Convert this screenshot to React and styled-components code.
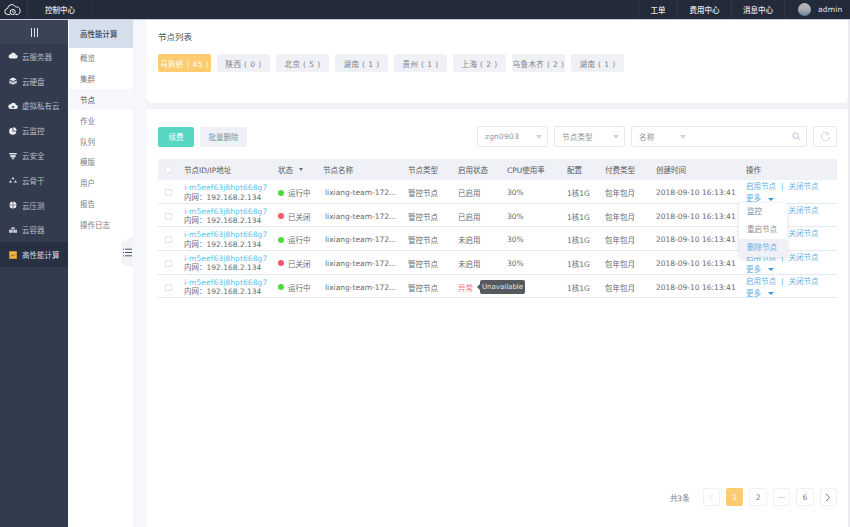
import React from 'react';
import styled, { createGlobalStyle } from 'styled-components';

const GlobalStyle = createGlobalStyle`
  html, body {
    margin: 0;
    padding: 0;
    background: #fff;
    overflow: hidden;
  }
  * {
    box-sizing: border-box;
  }
  body {
    font-family: 'DejaVu Sans', 'Noto Sans CJK SC', sans-serif;
    font-size: 7.5px;
    color: #5b5f66;
  }
`;

const Shell = styled.div`
  width: 850px;
  height: 527px;
  display: flex;
  flex-direction: column;
`;

const TopBar = styled.header`
  height: 20px;
  flex: none;
  display: flex;
  align-items: stretch;
  background: #232b3a;
  color: #e6e8ec;
  border-bottom: 1px solid #c9ccd3;
`;

const LogoCell = styled.div`
  width: 28px;
  display: flex;
  align-items: center;
  padding-left: 4px;
  border-right: 1px solid #2e3747;
`;

const ConsoleCell = styled.div`
  width: 65px;
  display: flex;
  align-items: center;
  justify-content: center;
  font-weight: 500;
  border-right: 1px solid #2a3241;
`;

const TopSpacer = styled.div`
  flex: 1;
`;

const TopLink = styled.div`
  width: ${p => p.$w}px;
  display: flex;
  align-items: center;
  justify-content: center;
  font-weight: 500;
  border-left: 1px solid #2e3747;
`;

const UserCell = styled.div`
  width: 66px;
  display: flex;
  align-items: center;
  gap: 7px;
  padding-left: 13px;
  border-left: 1px solid #2e3747;
  letter-spacing: 0.2px;
`;

const Avatar = styled.span`
  width: 13px;
  height: 13px;
  border-radius: 50%;
  background: linear-gradient(180deg, #b9b5bb 0%, #a8a8b2 55%, #5d7f9c 100%);
`;

const Body = styled.div`
  flex: 1;
  display: flex;
  min-height: 0;
`;

const Sidebar = styled.nav`
  width: 69px;
  flex: none;
  background: #333c4e;
  border-right: 1px solid #fff;
`;

const Collapse = styled.div`
  height: 24px;
  display: flex;
  align-items: center;
  justify-content: center;
  gap: 2px;
  background: #3b4456;
  span {
    width: 1px;
    height: 9px;
    background: #dfe3ea;
  }
`;

const NavItem = styled.div`
  height: 24.8px;
  display: flex;
  align-items: center;
  gap: 4px;
  padding-left: 8px;
  color: ${p => (p.$active ? '#d5d9e0' : '#b5bbc6')};
  background: ${p => (p.$active ? '#283142' : 'transparent')};
  white-space: nowrap;
  svg {
    flex: none;
  }
`;

const SubMenu = styled.aside`
  position: relative;
  width: 64px;
  flex: none;
  background: #fff;
`;

const SubTitle = styled.div`
  height: 27.5px;
  display: flex;
  align-items: center;
  padding-left: 11px;
  background: #d5deeb;
  color: #3d4350;
  font-weight: 500;
`;

const SubItem = styled.div`
  height: 20.8px;
  display: flex;
  align-items: center;
  padding-left: 11px;
  color: ${p => (p.$active ? '#4a4f58' : '#777c85')};
  background: ${p => (p.$active ? '#f7f8fb' : 'transparent')};
`;

const FoldTab = styled.div`
  position: absolute;
  right: 0;
  top: 217px;
  width: 12px;
  height: 31px;
  display: flex;
  align-items: center;
  justify-content: center;
  background: #f2f3f8;
  clip-path: polygon(100% 0, 100% 100%, 0 84%, 0 16%);
`;

const Gutter = styled.div`
  width: 13px;
  flex: none;
  background: #f6f7fb;
`;

const Main = styled.main`
  flex: 1;
  display: flex;
  flex-direction: column;
  min-width: 0;
  border-right: 2px solid #ebebef;
`;

const TopCard = styled.section`
  height: 83px;
  flex: none;
  padding: 12px 12px 0;
`;

const PageTitle = styled.h1`
  margin: 0 0 11px;
  font-size: 8.5px;
  line-height: 11px;
  font-weight: 400;
  color: #4a4f58;
`;

const TagRow = styled.div`
  display: flex;
  gap: 6px;
`;

const Tag = styled.div`
  width: 53px;
  height: 18px;
  display: flex;
  align-items: center;
  justify-content: center;
  border-radius: 2px;
  letter-spacing: 0.4px;
  white-space: pre;
  background: ${p => (p.$active ? '#fdcb70' : '#f0f1f6')};
  color: ${p => (p.$active ? '#fff' : '#7d8189')};
`;

const Divider = styled.div`
  position: relative;
  height: 6px;
  flex: none;
  background: #f0f1f6;
  &::before,
  &::after {
    content: '';
    position: absolute;
    top: -6px;
    width: 4px;
    height: 12px;
    background: #f3f4f9;
  }
  &::before {
    left: 0;
    clip-path: polygon(0 0, 100% 50%, 0 100%);
  }
  &::after {
    right: 0;
    clip-path: polygon(100% 0, 0 50%, 100% 100%);
  }
`;

const ListCard = styled.section`
  flex: 1;
  display: flex;
  flex-direction: column;
  padding: 17px 11px 0 12px;
`;

const Toolbar = styled.div`
  display: flex;
  align-items: center;
  gap: 6px;
  height: 21px;
  margin-bottom: 12px;
`;

const Button = styled.button`
  height: 20px;
  width: ${p => p.$w}px;
  padding: 0;
  border: none;
  border-radius: 2px;
  font: inherit;
  background: ${p => (p.$primary ? '#57d6c1' : '#f0f1f6')};
  color: ${p => (p.$primary ? '#fff' : '#8a8e96')};
`;

const Grow = styled.div`
  flex: 1;
`;

const Select = styled.div`
  position: relative;
  width: ${p => p.$w}px;
  height: 21px;
  display: flex;
  align-items: center;
  padding-left: 7px;
  border: 1px solid #e3e8f1;
  border-radius: 2px;
  color: #8d9199;
  letter-spacing: 0.2px;
`;

const Caret = styled.i`
  position: absolute;
  left: ${p => p.$left}px;
  top: 8px;
  width: 0;
  height: 0;
  border-left: 3px solid transparent;
  border-right: 3px solid transparent;
  border-top: 4px solid #c6d4e6;
`;

const SearchMark = styled.span`
  position: absolute;
  right: 5px;
  top: 5px;
  display: flex;
`;

const RefreshBtn = styled.div`
  width: 24px;
  height: 21px;
  display: flex;
  align-items: center;
  justify-content: center;
  border: 1px solid #e3e8f1;
  border-radius: 2px;
`;

const columns = '26px 94px 45px 85px 50px 49px 60px 38px 51px 90px 91px';

const HeadRow = styled.div`
  display: grid;
  grid-template-columns: ${columns};
  height: 21px;
  align-items: center;
  background: #f0f1f6;
  color: #555a63;
`;

const Row = styled.div`
  display: grid;
  grid-template-columns: ${columns};
  height: 23.67px;
  align-items: center;
  border-bottom: 1px solid #e5e9f2;
  color: #666a72;
  white-space: nowrap;
`;

const CheckCell = styled.div`
  display: flex;
  padding-left: 7px;
`;

const Check = styled.span`
  width: 7px;
  height: 7px;
  border: 1px solid #dfe3ea;
  border-radius: 1px;
  background: #fff;
`;

const HeadSort = styled.div`
  display: flex;
  align-items: center;
  gap: 6px;
`;

const SortMark = styled.i`
  width: 0;
  height: 0;
  border-left: 2.5px solid transparent;
  border-right: 2.5px solid transparent;
  border-top: 3px solid #666a72;
`;

const IdCell = styled.div`
  line-height: 9.5px;
`;

const NodeId = styled.div`
  color: #55c3ee;
  letter-spacing: 0.1px;
`;

const Status = styled.div`
  display: flex;
  align-items: center;
  gap: 4px;
`;

const Dot = styled.span`
  width: 6px;
  height: 6px;
  border-radius: 50%;
  background: ${p => (p.$on ? '#4cdb3c' : '#f4566a')};
`;

const NameCell = styled.div`
  padding-left: 2px;
`;

const StateCell = styled.div`
  position: relative;
  color: ${p => (p.$bad ? '#f5737f' : 'inherit')};
`;

const Tooltip = styled.div`
  position: absolute;
  left: 22px;
  top: -2px;
  width: 45px;
  height: 14px;
  display: flex;
  align-items: center;
  justify-content: center;
  border-radius: 2px;
  background: #55585d;
  color: #e8e8e8;
  font-size: 7px;
  &::before {
    content: '';
    position: absolute;
    left: -3px;
    top: 4px;
    border-top: 3px solid transparent;
    border-bottom: 3px solid transparent;
    border-right: 3px solid #55585d;
  }
`;

const OpsCell = styled.div`
  position: relative;
  padding-top: 1px;
  line-height: 12px;
  color: #5fb0e3;
`;

const OpsLine = styled.div`
  display: flex;
  align-items: center;
`;

const Sep = styled.span`
  margin: 0 5px;
`;

const MoreCaret = styled.i`
  margin-left: 7px;
  width: 0;
  height: 0;
  border-left: 3px solid transparent;
  border-right: 3px solid transparent;
  border-top: 3px solid #3c9ad6;
`;

const Dropdown = styled.div`
  position: absolute;
  left: -7px;
  top: 23px;
  z-index: 2;
  width: 48px;
  background: #fff;
  box-shadow: 0 1px 4px rgba(120, 130, 150, 0.28);
  border-radius: 1px;
`;

const DropItem = styled.div`
  height: 18px;
  display: flex;
  align-items: center;
  padding-left: 8px;
  color: ${p => (p.$hover ? '#5fb0e3' : '#8a8e96')};
  background: ${p => (p.$hover ? '#f0f1f6' : 'transparent')};
`;

const Pager = styled.div`
  margin-top: auto;
  margin-bottom: 21px;
  display: flex;
  align-items: center;
  justify-content: flex-end;
  gap: 6px;
`;

const PagerTotal = styled.span`
  margin-right: 7px;
  color: #7d8189;
`;

const PageBtn = styled.div`
  width: 17.4px;
  height: 18px;
  display: flex;
  align-items: center;
  justify-content: center;
  border-radius: 2px;
  border: 1px solid ${p => (p.$active ? '#fdcb70' : '#f0f1f5')};
  background: ${p => (p.$active ? '#fdcb70' : '#fff')};
  color: ${p => (p.$active ? '#fff' : '#777c85')};
`;

const CloudLogo = () => (
  <svg width="17" height="13" viewBox="0 0 17 13" fill="none" stroke="#eef0f3" strokeWidth="1">
    <path d="M6 11.5H4a3 3 0 0 1-.4-6A4.2 4.2 0 0 1 11.6 4 3.8 3.8 0 0 1 13 11.5h-1.5" />
    <circle cx="8.7" cy="9" r="2.6" />
    <path d="M8.7 7.6V9l1 .7" />
  </svg>
);

const iconPaths = {
  server: <path d="M3 9h6.2a2.3 2.3 0 0 0 .3-4.6A3.2 3.2 0 0 0 3.4 4 2.5 2.5 0 0 0 3 9z" />,
  disk: (
    <>
      <path d="M6 1.8 10.5 4 6 6.2 1.5 4z" />
      <path opacity="0.75" d="M1.5 5v3.6L6 10.4l4.5-1.8V5L6 7.2z" />
    </>
  ),
  vpc: <path fillRule="evenodd" d="M3 9.6h6.2a2.5 2.5 0 0 0 .3-5A3.4 3.4 0 0 0 3.2 4 2.8 2.8 0 0 0 3 9.6zM4.5 6.2h3v1.8h-3z" />,
  monitor: (
    <>
      <path d="M5.4 2a4.3 4.3 0 1 0 4.5 4.6H5.4z" />
      <path d="M6.4 1.6V5.6h4A4.2 4.2 0 0 0 6.4 1.6z" />
    </>
  ),
  shield: (
    <>
      <path d="M1.5 2.5h9v1.6h-9z" />
      <path d="M2.4 5.2h7.2L8.4 7.8H3.6zM4.2 8.6h3.6L6 10.4z" />
    </>
  ),
  backbone: (
    <>
      <path d="M6 2.4 7.8 5H4.2z" />
      <path d="M3 6.4 4.8 9H1.2zM9 6.4 10.8 9H7.2z" />
    </>
  ),
  stress: <path fillRule="evenodd" d="M6 1.8a4.2 4.2 0 1 1 0 8.4 4.2 4.2 0 0 1 0-8.4zM1.8 5.6v.8h8.4v-.8zM5.6 1.8v8.4h.8V1.8z" />,
  container: (
    <>
      <path opacity="0.8" d="M4 2.8h4v2.4H4z" />
      <path opacity="0.8" d="M1.2 5.8h4.5v3.6H1.2zM6.3 5.8h4.5v3.6H6.3z" />
    </>
  ),
  hpc: (
    <>
      <path fill="#f3b43f" d="M1.5 1.5h9v9h-9z" />
      <path fill="#8a6a2c" d="M3 7.5 5 5.5l1.5 1.2L9 4.5v1L6.5 7.8 5 6.6 3 8.5z" />
    </>
  ),
};

const NavIcon = ({ name }) => (
  <svg width="10" height="10" viewBox="0 0 12 12" fill="#eceef2">
    {iconPaths[name]}
  </svg>
);

const navItems = [
  ['server', '云服务器'],
  ['disk', '云硬盘'],
  ['vpc', '虚拟私有云'],
  ['monitor', '云监控'],
  ['shield', '云安全'],
  ['backbone', '云骨干'],
  ['stress', '云压测'],
  ['container', '云容器'],
  ['hpc', '高性能计算'],
];

const subItems = ['概览', '集群', '节点', '作业', '队列', '模版', '用户', '报告', '操作日志'];

const tags = [
  '马驹桥 ( 45 )',
  '陕西 ( 0 )',
  '北京 ( 5 )',
  '湖南 ( 1 )',
  '贵州 ( 1 )',
  '上海 ( 2 )',
  '乌鲁木齐 ( 2 )',
  '湖南 ( 1 )',
];

const nodes = [
  { on: true, state: '已启用' },
  { on: false, state: '已启用' },
  { on: true, state: '未启用' },
  { on: false, state: '未启用' },
  { on: true, state: '异常', bad: true },
];

const App = () => (
  <Shell>
    <GlobalStyle />
    <TopBar>
      <LogoCell>
        <CloudLogo />
      </LogoCell>
      <ConsoleCell>控制中心</ConsoleCell>
      <TopSpacer />
      <TopLink $w={39}>工单</TopLink>
      <TopLink $w={54}>费用中心</TopLink>
      <TopLink $w={53}>消息中心</TopLink>
      <UserCell>
        <Avatar />
        admin
      </UserCell>
    </TopBar>
    <Body>
      <Sidebar>
        <Collapse>
          <span />
          <span />
          <span />
        </Collapse>
        {navItems.map(([icon, label]) => (
          <NavItem key={icon} $active={icon === 'hpc'}>
            <NavIcon name={icon} />
            {label}
          </NavItem>
        ))}
      </Sidebar>
      <SubMenu>
        <SubTitle>高性能计算</SubTitle>
        {subItems.map(item => (
          <SubItem key={item} $active={item === '节点'}>
            {item}
          </SubItem>
        ))}
        <FoldTab>
          <svg width="9" height="9" viewBox="0 0 9 9" fill="none" stroke="#3d4350" strokeWidth="0.9">
            <path d="M0 1.2h1M2 1.2h7M0 4.5h1M2 4.5h7M0 7.8h1M2 7.8h7" />
          </svg>
        </FoldTab>
      </SubMenu>
      <Gutter />
      <Main>
        <TopCard>
          <PageTitle>节点列表</PageTitle>
          <TagRow>
            {tags.map((tag, i) => (
              <Tag key={i} $active={i === 0}>
                {tag}
              </Tag>
            ))}
          </TagRow>
        </TopCard>
        <Divider />
        <ListCard>
          <Toolbar>
            <Button $primary $w={36}>续费</Button>
            <Button $w={47}>批量删除</Button>
            <Grow />
            <Select $w={71}>
              zgn0903
              <Caret $left={58} />
            </Select>
            <Select $w={71}>
              节点类型
              <Caret $left={58} />
            </Select>
            <Select $w={176}>
              名称
              <Caret $left={48} />
              <SearchMark>
                <svg width="9" height="9" viewBox="0 0 9 9" fill="none" stroke="#c6d4e6" strokeWidth="1.2">
                  <circle cx="3.7" cy="3.7" r="2.6" />
                  <path d="M5.6 5.6 8.2 8.2" />
                </svg>
              </SearchMark>
            </Select>
            <RefreshBtn>
              <svg width="11" height="11" viewBox="0 0 11 11" fill="none" stroke="#c6d4e6" strokeWidth="0.9">
                <path d="M8.9 3.2A4.2 4.2 0 1 0 9.7 6" />
                <path d="M6.6 0.8 8.9 3.2 6.4 4.2" />
              </svg>
            </RefreshBtn>
          </Toolbar>
          <HeadRow>
            <CheckCell>
              <Check />
            </CheckCell>
            <div>节点ID/IP地址</div>
            <HeadSort>
              状态
              <SortMark />
            </HeadSort>
            <div>节点名称</div>
            <div>节点类型</div>
            <div>启用状态</div>
            <div>CPU使用率</div>
            <div>配置</div>
            <div>付费类型</div>
            <div>创建时间</div>
            <div>操作</div>
          </HeadRow>
          {nodes.map((node, i) => (
            <Row key={i}>
              <CheckCell>
                <Check />
              </CheckCell>
              <IdCell>
                <NodeId>i-m5eef63j8hpt668g7</NodeId>
                <div>内网：192.168.2.134</div>
              </IdCell>
              <Status>
                <Dot $on={node.on} />
                {node.on ? '运行中' : '已关闭'}
              </Status>
              <NameCell>lixiang-team-172...</NameCell>
              <div>管控节点</div>
              <StateCell $bad={node.bad}>
                {node.state}
                {node.bad && <Tooltip>Unavailable</Tooltip>}
              </StateCell>
              <div>30%</div>
              <div>1核1G</div>
              <div>包年包月</div>
              <div>2018-09-10 16:13:41</div>
              <OpsCell>
                <OpsLine>
                  启用节点
                  <Sep>|</Sep>
                  关闭节点
                </OpsLine>
                <OpsLine>
                  更多
                  <MoreCaret />
                </OpsLine>
                {i === 0 && (
                  <Dropdown>
                    <DropItem>监控</DropItem>
                    <DropItem>重启节点</DropItem>
                    <DropItem $hover>删除节点</DropItem>
                  </Dropdown>
                )}
              </OpsCell>
            </Row>
          ))}
          <Pager>
            <PagerTotal>共3条</PagerTotal>
            <PageBtn>
              <svg width="6" height="9" viewBox="0 0 6 9" fill="none" stroke="#dfe3ea" strokeWidth="1">
                <path d="M5 .8 1.4 4.5 5 8.2" />
              </svg>
            </PageBtn>
            <PageBtn $active>1</PageBtn>
            <PageBtn>2</PageBtn>
            <PageBtn>···</PageBtn>
            <PageBtn>6</PageBtn>
            <PageBtn>
              <svg width="6" height="9" viewBox="0 0 6 9" fill="none" stroke="#666a72" strokeWidth="1">
                <path d="M1 .8 4.6 4.5 1 8.2" />
              </svg>
            </PageBtn>
          </Pager>
        </ListCard>
      </Main>
    </Body>
  </Shell>
);

export default App;
